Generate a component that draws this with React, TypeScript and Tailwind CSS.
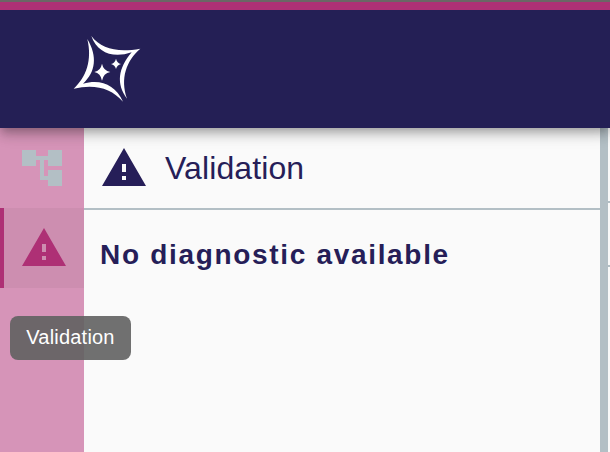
const WARNING_PATH = 'M1 21h22L12 2 1 21zm12-3h-2v-2h2v2zm0-4h-2v-4h2v4z';
const TREE_PATH = 'M22 11V3h-7v3H9V3H2v8h7V8h2v10h4v3h7v-8h-7v3h-2V8h2v3h7z';

function Icon({ path, className }: { path: string; className: string }) {
  return (
    <svg viewBox="0 0 24 24" fill="currentColor" className={`size-12 shrink-0 ${className}`}>
      <path d={path} />
    </svg>
  );
}

function Logo() {
  return (
    <svg viewBox="0 0 285 255" fill="#fff" className="h-[85px] w-[95px]">
      <path d="M94 33 C124 72 172 83 241 71 C199 107 180 160 201 221 C168 177 174 130 215 82 C160 101 112 84 94 33Z" />
      <path d="M82 42 C113 94 107 141 69 176 C121 161 166 178 189 230 C153 189 104 176 41 191 C79 156 97 106 82 42Z" />
      <path d="M126 116 Q130 137 151 141 Q130 145 126 167 Q122 145 103 141 Q122 137 126 116Z" />
      <path d="M168 101 Q171 114 183 117 Q171 120 168 132 Q165 120 153 117 Q165 114 168 101Z" />
    </svg>
  );
}

export default function App() {
  return (
    <div className="relative flex h-[452px] w-[610px] flex-col overflow-hidden bg-[#fafafa] font-['Liberation_Sans',Arial,sans-serif] text-[#261e58]">
      <header className="relative z-10 h-32 shrink-0 border-t-2 border-[#6b6665] bg-[#241f55] shadow-[0_4px_8px_-2px_rgba(0,0,0,0.2),0_8px_10px_0_rgba(0,0,0,0.14),0_2px_20px_0_rgba(0,0,0,0.12)]">
        <div className="h-2 bg-[#ae3075]" />
        <div className="pt-[15px] pl-[60px]">
          <Logo />
        </div>
      </header>
      <div className="flex min-h-0 flex-1">
        <nav className="w-[84px] shrink-0 bg-[#d694b8]">
          <div className="flex h-20 items-center pl-[18px]">
            <Icon path={TREE_PATH} className="text-[#b3bfc5]" />
          </div>
          <div className="flex h-20 items-center border-l-4 border-[#ae3075] bg-[#cd8eb0] pl-4">
            <Icon path={WARNING_PATH} className="text-[#ae3075]" />
          </div>
        </nav>
        <main className="w-[516px] shrink-0">
          <div className="flex h-[82px] items-start border-b-2 border-[#b3bfc5] pt-4 pl-4">
            <Icon path={WARNING_PATH} className="" />
            <h1 className="ml-[17px] text-[32px] leading-[48px] tracking-[0.1px]">Validation</h1>
          </div>
          <p className="pt-[25px] pl-4 text-[28px] leading-10 font-bold tracking-[1.68px] whitespace-nowrap">
            No diagnostic available
          </p>
        </main>
        <div className="w-2 shrink-0 bg-[#b3bfc5]" />
        <div className="flex-1 pt-[73px]">
          <div className="h-[66px] border-y-2 border-[#b3bfc5]" />
        </div>
      </div>
      <div className="absolute top-[316px] left-[10px] flex h-11 w-[121px] items-center justify-center rounded-lg bg-[#616161]/90 pb-0.5 text-[20px] tracking-[0.2px] text-white">
        Validation
      </div>
    </div>
  );
}
